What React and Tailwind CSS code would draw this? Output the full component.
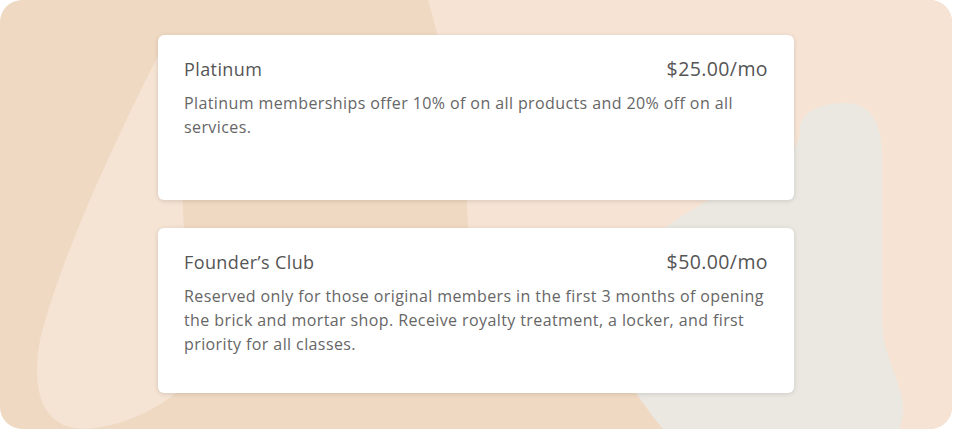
import React from "react";

const PLANS = [
  {
    name: "Platinum",
    price: "$25.00/mo",
    text: "Platinum memberships offer 10% of on all products and 20% off on all services.",
  },
  {
    name: "Founder\u2019s Club",
    price: "$50.00/mo",
    text: "Reserved only for those original members in the first 3 months of opening the brick and mortar shop. Receive royalty treatment, a locker, and first priority for all classes.",
  },
];

function Backdrop() {
  return (
    <svg className="absolute inset-0" width="952" height="429" viewBox="0 0 952 429">
      <rect width="952" height="429" fill="#f0d9c2" />
      {/* light peach, right half */}
      <path
        d="M428 0 C445 60 468 150 468 230 C468 300 600 330 700 429 L952 429 L952 0 Z"
        fill="#f6e3d4"
      />
      {/* light blob, left */}
      <path
        d="M168 36 C125 120 62 250 40 340 C30 395 45 429 85 429 C130 426 170 402 190 380 L176 36 Z"
        fill="#f5e3d4"
      />
      {/* grey blob */}
      <path
        d="M845 103 C870 103 882 122 882 155 L882 320 C882 360 906 385 903 415 L900 429 L663 429 C640 400 600 350 610 300 C620 260 650 235 700 205 C760 170 800 160 800 130 C800 112 820 103 845 103 Z"
        fill="#ebe8e2"
      />
    </svg>
  );
}

function PlanCard({ plan }) {
  return (
    <div className="h-[165px] rounded-md bg-white px-[26px] pt-[20px] tracking-[0.4px] shadow-[0_1px_5px_rgba(0,0,0,0.13)]">
      <div className="flex items-center justify-between text-[18px] leading-[28px] text-[#555]">
        <span>{plan.name}</span>
        <span className="text-[19.5px]">{plan.price}</span>
      </div>
      <p className="mt-[8px] text-[16px] leading-[24px] text-[#666]">{plan.text}</p>
    </div>
  );
}

export default function App() {
  return (
    <div className="h-[431px] w-[954px] bg-white" style={{ fontFamily: "'Open Sans', sans-serif" }}>
      <div className="relative h-[429px] w-[952px] overflow-hidden rounded-[22px]">
        <Backdrop />
        <div className="relative ml-[158px] flex w-[636px] flex-col gap-[28px] pt-[35px]">
          {PLANS.map((p) => (
            <PlanCard key={p.name} plan={p} />
          ))}
        </div>
      </div>
    </div>
  );
}
